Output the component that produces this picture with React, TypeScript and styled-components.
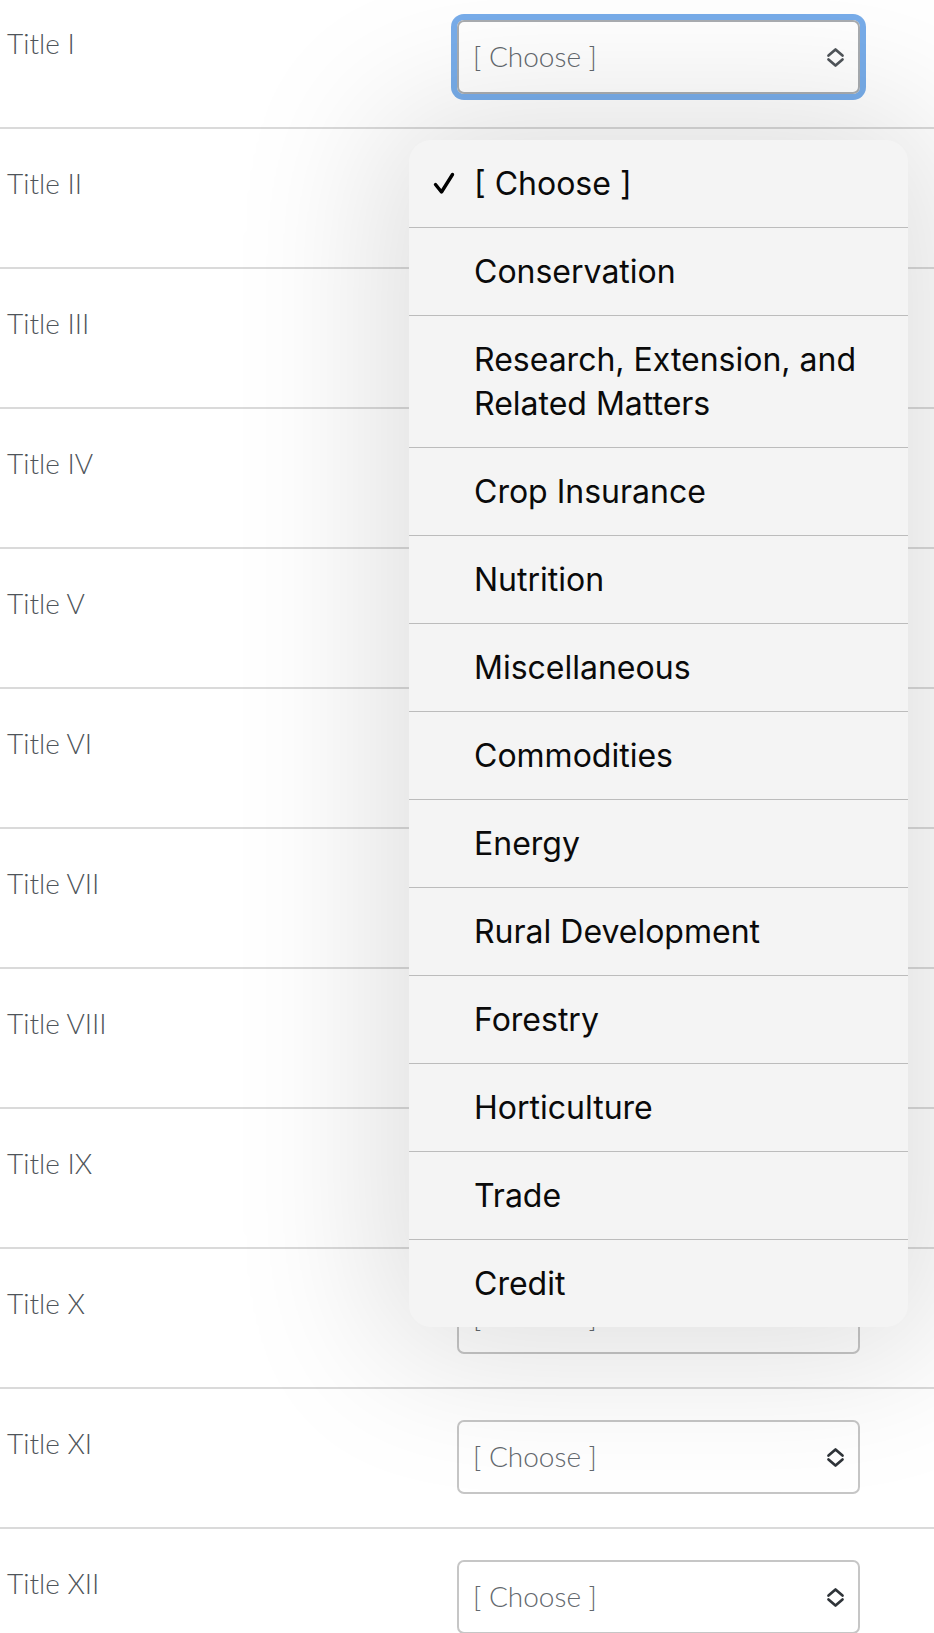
import React from "react";
import styled, { createGlobalStyle } from "styled-components";

const Global = createGlobalStyle`
  html, body { margin: 0; padding: 0; background: #ffffff; }
  body { overflow: hidden; }
`;

const Screen = styled.div`
  position: relative;
  width: 934px;
  height: 1633px;
  overflow: hidden;
  background: #ffffff;
`;

const List = styled.div`
  margin-top: -11px;
`;

const Row = styled.div`
  display: flex;
  align-items: flex-start;
  padding: 31px 0 33px 7px;
  border-bottom: 2px solid #dadada;
`;

const Label = styled.div`
  flex: 0 0 450px;
  margin-top: 7px;
  font-family: Lato, "Noto Sans", sans-serif;
  font-weight: 300;
  font-size: 28px;
  line-height: 1.2;
  color: #4f555a;
`;

const Control = styled.div<{ $focused?: boolean }>`
  box-sizing: border-box;
  width: 403px;
  height: 74px;
  display: flex;
  align-items: center;
  justify-content: space-between;
  padding: 0 13px 0 14px;
  border: 2px solid ${(p) => (p.$focused ? "#a9adb1" : "#c6c6c6")};
  border-radius: 7px;
  background: transparent;
  box-shadow: ${(p) => (p.$focused ? "0 0 0 6px #78adea" : "none")};
`;

const Placeholder = styled.span`
  font-family: Lato, "Noto Sans", sans-serif;
  font-weight: 300;
  font-size: 28px;
  line-height: 1.2;
  color: #63686d;
`;

const Menu = styled.div`
  position: absolute;
  top: 140px;
  left: 409px;
  width: 499px;
  background: #f4f4f4;
  border-radius: 22px;
  overflow: hidden;
  box-shadow: 0 0 150px 30px rgba(0, 0, 0, 0.13);
  z-index: 2;
`;

const Item = styled.div`
  display: grid;
  grid-template-columns: 65px 1fr;
  align-items: center;
  padding: 21.5px 20px 21.5px 0;
  border-top: 1px solid #bcbcbc;
  &:first-child { border-top: none; }
`;

const CheckCell = styled.div`
  display: flex;
  align-items: center;
  padding-left: 24px;
  height: 44px;
`;

const ItemText = styled.div`
  font-family: Inter, "Noto Sans", sans-serif;
  font-weight: 400;
  font-size: 32px;
  line-height: 44px;
  color: #0a0a0a;
`;

const Chevrons = ({ color }: { color: string }) => (
  <svg width="19" height="21" viewBox="0 0 19 21" fill="none">
    <path d="M2.5 8.5 L9.5 2.5 L16.5 8.5" stroke={color} strokeWidth="2.7" strokeLinecap="round" strokeLinejoin="round" />
    <path d="M2.5 12.5 L9.5 18.5 L16.5 12.5" stroke={color} strokeWidth="2.7" strokeLinecap="round" strokeLinejoin="round" />
  </svg>
);

const Check = () => (
  <svg width="22" height="23" viewBox="0 0 22 23" fill="none">
    <path d="M2.5 12.5 L8.5 20 L19.5 2.5" stroke="#000" strokeWidth="3.4" strokeLinecap="round" strokeLinejoin="round" />
  </svg>
);

const titles = [
  "Title I",
  "Title II",
  "Title III",
  "Title IV",
  "Title V",
  "Title VI",
  "Title VII",
  "Title VIII",
  "Title IX",
  "Title X",
  "Title XI",
  "Title XII",
];

const options = [
  "[ Choose ]",
  "Conservation",
  "Research, Extension, and Related Matters",
  "Crop Insurance",
  "Nutrition",
  "Miscellaneous",
  "Commodities",
  "Energy",
  "Rural Development",
  "Forestry",
  "Horticulture",
  "Trade",
  "Credit",
];

export default function App() {
  return (
    <Screen>
      <Global />
      <List>
        {titles.map((t, i) => (
          <Row key={t}>
            <Label>{t}</Label>
            <Control $focused={i === 0}>
              <Placeholder>[ Choose ]</Placeholder>
              <Chevrons color={i === 0 ? "#50555a" : "#2f3439"} />
            </Control>
          </Row>
        ))}
      </List>
      <Menu>
        {options.map((o, i) => (
          <Item key={o}>
            <CheckCell>{i === 0 ? <Check /> : null}</CheckCell>
            <ItemText>{o === options[2] ? <>Research, Extension, and<br />Related Matters</> : o}</ItemText>
          </Item>
        ))}
      </Menu>
    </Screen>
  );
}
